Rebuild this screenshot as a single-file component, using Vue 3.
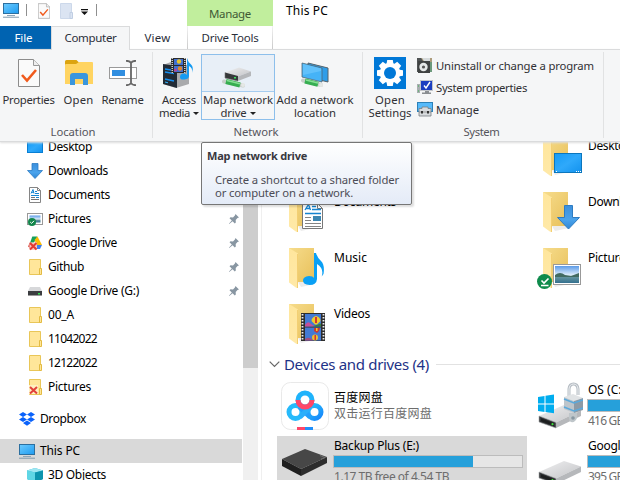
<script setup>
// Spreads a label over its nominal width so it keeps the metrics of the shell font.
const vFit = {
  mounted(el, { value }) {
    if (!value) return
    const natural = el.getBoundingClientRect().width
    const n = [...el.textContent].length
    el.style.letterSpacing = ((value - natural) / n).toFixed(3) + 'px'
  }
}

const tree = [
  { icon: 'desktop', text: 'Desktop', w: 44 },
  { icon: 'down', text: 'Downloads', w: 60, pin: true },
  { icon: 'doc', text: 'Documents', w: 62, pin: true },
  { icon: 'pic', text: 'Pictures', w: 43, pin: true },
  { icon: 'gdrive', text: 'Google Drive', w: 69, pin: true },
  { icon: 'folder', text: 'Github', w: 36, pin: true },
  { icon: 'disk', text: 'Google Drive (G:)', w: 91, pin: true },
  { icon: 'folder', text: '00_A', w: 26 },
  { icon: 'folder', text: '11042022', w: 49 },
  { icon: 'folder', text: '12122022', w: 49 },
  { icon: 'folderx', text: 'Pictures', w: 43 },
  { icon: 'dropbox', text: 'Dropbox', w: 46, root: true },
  { icon: 'pc', text: 'This PC', w: 40, root: true, selected: true },
  { icon: '3d', text: '3D Objects', w: 58 }
]

const folders = [
  { icon: '', text: '3D Objects', w: 58 },
  { icon: 'f-desktop', text: 'Desktop', w: 44 },
  { icon: 'f-doc', text: 'Documents', w: 62 },
  { icon: 'f-down', text: 'Downloads', w: 60 },
  { icon: 'f-music', text: 'Music', w: 33 },
  { icon: 'f-pic', text: 'Pictures', w: 43 },
  { icon: 'f-video', text: 'Videos', w: 36 }
]

const drives = [
  { icon: 'baidu', text: '百度网盘', w: 49, sub: '双击运行百度网盘', sw: 98 },
  { icon: 'osdrive', text: 'OS (C:)', w: 37, used: 60, sub: '416 GB free of 930 GB', sw: 107 },
  { icon: 'backup', text: 'Backup Plus (E:)', w: 85, used: 74.1, sub: '1.17 TB free of 4.54 TB', sw: 115, selected: true },
  { icon: 'bigdrive', text: 'Google Drive (G:)', w: 91, used: 60, sub: '395 GB free of 930 GB', sw: 107 }
]

const tools = [
  { icon: 'uninstall', text: 'Uninstall or change a program', w: 158 },
  { icon: 'sysprop', text: 'System properties', w: 91 },
  { icon: 'manage', text: 'Manage', w: 43 }
]
</script>

<template>
  <div class="window">
    <svg class="defs" aria-hidden="true">
      <defs>
        <linearGradient id="gBlue" x1="0" y1="0" x2="1" y2="1"><stop offset="0" stop-color="#6ccbff" /><stop offset="1" stop-color="#1e9bf0" /></linearGradient>
        <linearGradient id="gDesk" x1="0" y1="0" x2="1" y2="1"><stop offset="0" stop-color="#149bf5" /><stop offset=".5" stop-color="#2fa9fb" /><stop offset="1" stop-color="#1292ee" /></linearGradient>
        <linearGradient id="gFold" x1="0" y1="0" x2="1" y2="1"><stop offset="0" stop-color="#f6dc8c" /><stop offset="1" stop-color="#e8c05a" /></linearGradient>
        <linearGradient id="gFlap" x1="0" y1="0" x2="0" y2="1"><stop offset="0" stop-color="#ffe69c" /><stop offset="1" stop-color="#ffe9a8" /></linearGradient>
        <linearGradient id="gArrow" x1="0" y1="0" x2="0" y2="1"><stop offset="0" stop-color="#3c8fdc" /><stop offset=".6" stop-color="#4aa3ec" /><stop offset="1" stop-color="#2f86d4" /></linearGradient>
        <linearGradient id="gTop" x1="0" y1="0" x2="1" y2="1"><stop offset="0" stop-color="#f0f0f1" /><stop offset="1" stop-color="#c3c4c7" /></linearGradient>
        <linearGradient id="gSky" x1="0" y1="0" x2="0" y2="1"><stop offset="0" stop-color="#5c9be8" /><stop offset=".55" stop-color="#e4f1fb" /><stop offset=".6" stop-color="#6a99a0" /><stop offset="1" stop-color="#34708f" /></linearGradient>
        <linearGradient id="gCloud" x1="0" y1="0" x2="1" y2="1"><stop offset="0" stop-color="#27c4fb" /><stop offset="1" stop-color="#1787fb" /></linearGradient>
      </defs>

      <symbol id="pc" viewBox="0 0 16 16"><rect x=".5" y="1.500" width="15" height="10" fill="url(#gBlue)" stroke="#2c6f9f" /><path d="M4 13h8v1H4z" fill="#8fa6b8" /><path d="M0 14.700h16v1H0z" fill="#7f98ab" /></symbol>
      <symbol id="page" viewBox="0 0 22 28"><path d="M.5.5h15l6 6v21H.5z" fill="#fafafa" stroke="#8c8c8c" /><path d="M15.500.5v6h6" fill="#eee" stroke="#9a9a9a" /><path d="M4 16l5 5.500 9-10.500" fill="none" stroke="#f05a1c" stroke-width="2.600" /></symbol>
      <symbol id="folder" viewBox="0 0 16 16"><path d="M2.500.5h11v15h-11z" fill="#ffe69a" stroke="#e9c658" /><path d="M12.500 9.500h2v6h-2z" fill="#ffe69a" stroke="#e3bb43" /></symbol>
      <symbol id="folderx" viewBox="0 0 16 16"><use href="#folder" /><path d="M2 6h9v9H2z" fill="#fff0c0" /><path d="M3 8l7 6.500M10 8l-7 6.500" stroke="#e2413a" stroke-width="2" /></symbol>
      <symbol id="desktop" viewBox="0 0 16 16"><rect x=".5" y="2.500" width="15" height="11" fill="url(#gDesk)" stroke="#087fd4" /></symbol>
      <symbol id="down" viewBox="0 0 16 16"><path d="M5 .5h6v7h4.500L8 15.500.5 7.500H5z" fill="url(#gArrow)" stroke="#2b7bc4" stroke-width=".8" /></symbol>
      <symbol id="doc" viewBox="0 0 16 16"><path d="M2.500.5h8l3 3v12h-11z" fill="#fff" stroke="#858585" /><path d="M10.500.5v3h3" fill="none" stroke="#858585" /><path d="M4 6.500l2-4 1 4M4.500 5.300h2.500M8 4.500h2M8 6.500h4M4 8.500h8M9 10.500h3" stroke="#1686d2" fill="none" /><path d="M4 10.500h4M4 12.500h8" stroke="#777" /></symbol>
      <symbol id="pic" viewBox="0 0 16 16"><rect x=".5" y="2.500" width="15" height="11" fill="#fff" stroke="#999" /><rect x="2.500" y="4.500" width="11" height="7" fill="url(#gSky)" /><circle cx="5" cy="11" r="4" fill="#12864b" /><path d="M3.200 11l1.400 1.400L7 9.800" stroke="#fff" fill="none" /></symbol>
      <symbol id="gdrive" viewBox="0 0 16 16"><path d="M5.300 1.500h5.200L7 7.500 3 8z" fill="#17a05a" /><path d="M10.500 1.500L15 10h-5L7.500 5z" fill="#fbbc05" /><path d="M10 10h5l-2 4H8z" fill="#3f7ff0" /><path d="M1 11.500L3 7l4 4-3 3z" fill="#d84b43" /><path d="M2.500 7.500H10V15H2.500z" fill="#f6c9c2" /><path d="M3 8l6.500 6.500M9.500 8L3 14.500" stroke="#e23b32" stroke-width="2" /></symbol>
      <symbol id="disk" viewBox="0 0 16 16"><path d="M3 4h10l2 4H1z" fill="#d7d8da" /><rect x="1" y="8" width="14" height="5" fill="#3b3d40" /><path d="M1 12.500h14" stroke="#999" /><rect x="11" y="10" width="2" height="1.500" fill="#31e151" /></symbol>
      <symbol id="dropbox" viewBox="0 0 16 16"><path d="M4 1l4 2.500L4 6 0 3.500zM12 1l4 2.500L12 6 8 3.500zM4 6l4 2.500L4 11 0 8.500zM12 6l4 2.500-4 2.500-4-2.500zM8 9.500l4 2.500-4 2.700L4 12z" fill="#0a62fb" /></symbol>
      <symbol id="3d" viewBox="0 0 16 16"><path d="M0 3.500L8 1l8 2.500V12l-8 4-8-4z" fill="#35b8d2" /><path d="M0 3.500L8 1l8 2.500-8 2z" fill="#9fe7f2" /><path d="M0 3.500l8 2V16l-8-4z" fill="#5fd6e5" /><path d="M8 5.500l8-2V12l-8 4z" fill="#0c94ae" /></symbol>
      <symbol id="pin" viewBox="0 0 12 12"><path d="M7.500 1l3.500 3.500-1.500.6L7.700 7l.1 2.500-1 1L4.600 8.200 1.200 11l-.3-.2L3.800 7.400 1.500 5.200l1-1L5 4.400l1.900-1.800z" fill="#8896a2" /></symbol>

      <symbol id="openfolder" viewBox="0 0 28 26"><path d="M0 1.500Q0 0 1.500 0h10l3 3H28v6H0z" fill="#dca410" /><path d="M1 4h10l3-2h13q1 0 1 1v21H0V5q0-1 1-1z" fill="#ffd461" /><path d="M5 25V16q0-3 3-3h12q3 0 3 3v9h-5v-6h-8v6z" fill="#3a96dd" /></symbol>
      <symbol id="rename" viewBox="0 0 28 26"><rect x=".5" y="7.500" width="27" height="11" fill="#fff" stroke="#9a9a9a" /><rect x="3" y="10" width="13" height="6" fill="#308ee0" /><path d="M17 .8q4 0 5 2.200 1-2.200 5-2.200M22 3v20M17 25.200q4 0 5-2.200 1 2.200 5 2.200" fill="none" stroke="#666" stroke-width="1.800" /></symbol>
      <symbol id="media" viewBox="0 0 32 32"><path d="M0 8L13 3l13 6v18l-13 4-13-4z" fill="#a9aaac" /><path d="M0 7l14 2v22L0 27z" fill="#222b35" /><path d="M2 12l9 1.500M2 15l9 1.500M2 22l9 2" stroke="#168ff0" stroke-width="1.500" /><path d="M2 25l3 .8" stroke="#31b6ff" /><rect x="8" y="1" width="15" height="15" fill="#2b2b2b" /><path d="M9.200 1v15M21.800 1v15" stroke="#ddd" stroke-width="1.400" stroke-dasharray="1 1" /><rect x="11" y="2" width="9" height="6" fill="#416fd0" /><rect x="11" y="9" width="9" height="6" fill="#416fd0" /><circle cx="16" cy="4.500" r="2.200" fill="#e5c22e" /><circle cx="17" cy="11.500" r="2.200" fill="#de862e" /><circle cx="12.500" cy="13" r="1.600" fill="#b5429a" /><path d="M24 18V1q1 4 4 6.500T29 16q1-5-3-7v10q0 3-4.500 3.500T17 20t3-3.500 4 1.500z" fill="#159bf2" /></symbol>
      <symbol id="netdrive" viewBox="0 0 32 21"><path d="M3 5.500L17 .5l12 4-13 5z" fill="url(#gTop)" /><path d="M3 5.500L16 9v5L3 11z" fill="#36383a" /><path d="M16 9.500l13-5v4.500L16 14z" fill="#b5b7ba" /><path d="M3 11l13 3M3 5.500v5.500" stroke="#777" stroke-width=".6" /><rect x="12" y="10" width="2" height="1.500" fill="#39e35d" /><path d="M2 14.500l19 4" stroke="#c9cfcb" stroke-width="4" stroke-linecap="round" /><path d="M4 14.500l14 3.500" stroke="#36ad50" stroke-width="5" /><path d="M5 13.500l13 3.200" stroke="#86e094" stroke-width="1.600" /><circle cx="21" cy="18" r="2" fill="#e5e8e6" /></symbol>
      <symbol id="netloc" viewBox="0 0 28 26"><path d="M7 1l20 5v14L7 15z" fill="#2f9de8" stroke="#56636b" /><path d="M1 1l20 5v14L1 15z" fill="#45b3f7" stroke="#4e6674" stroke-width=".8" /><path d="M2 2l18 4.600V9L2 13z" fill="#6dc8fc" opacity=".7" /><path d="M2 18.500l18 4.500" stroke="#c9cfcb" stroke-width="4" stroke-linecap="round" /><path d="M4 19l13 3.200" stroke="#37ae51" stroke-width="5" /><path d="M5 18l12 3" stroke="#86e094" stroke-width="1.500" /><circle cx="20" cy="23" r="2" fill="#e5e8e6" /></symbol>
      <symbol id="gear" viewBox="0 0 32 32"><rect width="32" height="32" fill="#0078d7" /><g fill="#fff" transform="translate(16 16)"><circle r="10.200" /><g v-for="a in 8" :key="a"><path :transform="`rotate(${a * 45})`" d="M-2.800-13h5.600l.8 5h-7.200z" /></g></g><circle cx="16" cy="16" r="6" fill="#0078d7" /></symbol>
      <symbol id="uninstall" viewBox="0 0 16 16"><path d="M4 1h11v14H5z" fill="#ad9c7c" /><path d="M0 1h4l2 3v11H0z" fill="#4f5354" /><rect x="1" y="4" width="12" height="12" fill="#3f4242" /><circle cx="6.500" cy="10" r="4.200" fill="#e5e8e8" /><circle cx="6.500" cy="10" r="1.600" fill="#555" /><path d="M5 1h8v3H7z" fill="#d7dbdc" /><path d="M13 5h2v10h-2z" fill="#6c9a7c" /></symbol>
      <symbol id="sysprop" viewBox="0 0 16 16"><path d="M0 5h3v9H0z" fill="#a9aeb1" /><path d="M1 7h1M1 12h1" stroke="#36b94b" /><rect x="3.500" y="1.500" width="12" height="10" fill="#1d3fc0" stroke="#c3c6cb" /><path d="M7 6.500L9 9l4-6" fill="none" stroke="#fff" stroke-width="1.400" /><path d="M8 12h4v1.500h2V15H5v-1.500h3z" fill="#8a8e92" /></symbol>
      <symbol id="manage" viewBox="0 0 16 16"><rect x=".5" y="1.500" width="15" height="9" fill="#56bafa" stroke="#2c81b8" /><path d="M5 7.500V6h6v1.500h3V15H2V7.500z" fill="#d7dadd" stroke="#777d84" stroke-width=".8" /><path d="M2 11h12" stroke="#888" stroke-width=".8" /><path d="M4 10h2v2.500H4zM10 10h2v2.500h-2z" fill="#333" /></symbol>

      <symbol id="bigfolder" viewBox="0 0 48 48"><path d="M17 38h17v2l-14 3z" fill="#ececec" /><path d="M8 4h25v34H15z" fill="url(#gFold)" /><path d="M8 4l9 5.500V43l-1.500 1L8 38.500z" fill="url(#gFlap)" /><path d="M16.500 10v34" stroke="#f3cf73" /></symbol>
      <symbol id="f-desktop" viewBox="0 0 48 48"><use href="#bigfolder" /><rect x="19.500" y="21.500" width="27" height="19" fill="url(#gDesk)" stroke="#0b76bd" /><path d="M21 39.500h1M41 39.500h1M43 39.500h1M45 39.500h1" stroke="#fff" /></symbol>
      <symbol id="f-doc" viewBox="0 0 48 48"><use href="#bigfolder" /><path d="M21.500 15.500h15l5 5v20h-20z" fill="#fff" stroke="#777" /><path d="M36.500 15.500v5h5" fill="none" stroke="#777" /><path d="M24 22l3.500-5.500 2 5.500M25 20.500h4M31 18.500h4M31 21.500h9M24 25.500h16" stroke="#1584d0" stroke-width="1.300" fill="none" /><path d="M24 29.500h6M24 32.500h6M24 35.500h16M24 38.500h16" stroke="#858585" /><rect x="32" y="28" width="8" height="5" fill="#3c86b2" /></symbol>
      <symbol id="f-down" viewBox="0 0 48 48"><use href="#bigfolder" /><path d="M29.500 17.500h8v12h7L33.500 41l-11-11.500h7z" fill="url(#gArrow)" stroke="#2e7cc2" /></symbol>
      <symbol id="f-music" viewBox="0 0 48 48"><use href="#bigfolder" /><path d="M33 34V9h2q1 4 5 8t2.500 13l-1.800 2.500q2.500-8-4.700-12.500V35q-.5 6-7.500 6-6.500-.5-6.500-4.500t6-4.500q4 0 5 2z" fill="#0aa0f5" /></symbol>
      <symbol id="f-pic" viewBox="0 0 48 48"><use href="#bigfolder" /><rect x="18.500" y="20.500" width="27" height="20" fill="#fff" stroke="#999" /><rect x="20" y="22" width="24" height="17" fill="url(#gSky)" /><path d="M20 31q5-4 10 0l6 1 8-3v4H20z" fill="#426b61" /><circle cx="9.500" cy="37.500" r="7.500" fill="#0f8b4c" /><path d="M6.500 36.500l2.500 2.500 4.500-4.500M6 41.500h7.500" stroke="#fff" stroke-width="1.600" fill="none" /></symbol>
      <symbol id="f-video" viewBox="0 0 48 48"><use href="#bigfolder" /><rect x="20" y="13" width="24" height="28" fill="#2e2e2e" /><path d="M21.500 14v27M42.500 14v27" stroke="#eee" stroke-width="1.800" stroke-dasharray="1.500 1.500" /><rect x="24" y="14" width="16" height="12.500" fill="#437ad3" /><rect x="24" y="27.500" width="16" height="13" fill="#437ad3" /><path d="M24 25q3-5 6-1l4 2.500H24z" fill="#c74e98" /><path d="M31 26.500l9-3v3z" fill="#378140" /><path d="M32 17.500q3-3 6 0t0 5l-2 2h-2l-2-2q-3-2 0-5z" fill="#f0cb2d" /><path d="M34 17h2v6h-2z" fill="#d5342f" /><path d="M33 28h6l-1 3-2 2-3-2z" fill="#ca3832" /><path d="M35 28h1.500v3H35z" fill="#f0cb2d" /><circle cx="34" cy="37.500" r="3" fill="#ecbf31" /><path d="M33.500 35h1.500v5h-1.500z" fill="#d5342f" /><path d="M24 39q5-3 8 1.500h-8z" fill="#a44e7d" /></symbol>

      <symbol id="baidu" viewBox="0 0 48 48"><rect x=".5" y=".5" width="47" height="47" rx="9" fill="#fff" stroke="#e9e9e9" /><g fill="none" stroke-width="5"><circle cx="14.500" cy="30" r="6.500" stroke="#26bafb" /><circle cx="33.500" cy="30" r="6.500" stroke="url(#gCloud)" /><path d="M18.500 25l10.500 10" stroke="#239ffc" /><path d="M19 35l10-9.500" stroke="#2aaefb" /><circle cx="24" cy="18" r="7" stroke="#1fb3fb" /><path d="M17 18a7 7 0 1 0 14 0" stroke="#ff4668" /></g><path d="M16 45h8v3h-8z" fill="#ff4668" /><path d="M24 45h8v3h-8z" fill="#1f8ffa" /></symbol>
      <symbol id="drivebody" viewBox="0 0 48 26"><path d="M4 13L29 2l17 5.500-25 12z" fill="url(#gTop)" /><path d="M4 13l17 6.500V25L4 19z" fill="#333538" /><path d="M21 19.500l25-12V13L21 25z" fill="#b6b8bb" /><path d="M6 15.200l13 5V23L6 18.200z" fill="#1d1f20" /><circle cx="17.500" cy="21.200" r="1.100" fill="#3fe03b" /><path d="M4 13l17 6.500V25L4 19z" fill="none" stroke="#a5a7aa" stroke-width=".6" /></symbol>
      <symbol id="bigdrive" viewBox="0 0 48 48"><use href="#drivebody" y="21" width="48" height="26" /></symbol>
      <symbol id="osdrive" viewBox="0 0 48 48"><use href="#drivebody" y="21" width="48" height="26" /><path d="M3 15l6.500-1v7.500H3zM10.500 13.800L19 12.500v9h-8.500zM3 22.500h6.500V30L3 29zM10.500 22.500H19v8.800l-8.500-1.200z" fill="#00adef" /><path d="M34 14V7q.5-5 4.500-5T43 7v6" fill="none" stroke="#b6bdc4" stroke-width="3" /><path d="M34 14V7q.5-5 4.500-5T43 7v6" fill="none" stroke="#eceff1" stroke-width="1" /><path d="M29 15l9-3 10 4-9 3z" fill="#e0e3e5" /><path d="M29 15l10 4v12l-10-4z" fill="#bdc5cb" /><path d="M39 19l9-3v12l-9 3z" fill="#8c9aa6" /><path d="M29 17l10 4 9-3M29 25l10 4 9-3" fill="none" stroke="#5aa9dc" stroke-width="1.500" /><path d="M34 31h8v5q-2 5-6 4-2-1-2-4z" fill="#bfc6ca" /><circle cx="38" cy="36" r="1.800" fill="#8998a2" /></symbol>
      <symbol id="backup" viewBox="0 0 48 48"><path d="M1 21L24 11l22 8-26 12z" fill="#474747" /><path d="M1 21l19 10v7L1 28z" fill="#1f1f1f" /><path d="M20 31l26-12v6L20 38z" fill="#2d2d2d" /><path d="M39 17.500l5 2-4 1.500" stroke="#777" fill="none" stroke-width=".8" /></symbol>
    </svg>

    <header class="titlebar">
      <svg class="i16"><use href="#pc" /></svg>
      <i class="tick"></i>
      <svg class="qpage"><use href="#page" /></svg>
      <svg class="qfolder" viewBox="0 0 13 16"><path d="M.5.5h11v15H.5z" fill="#dbe4f2" stroke="#ccd8ea" /><path d="M10 9.500h2.500v6H10z" fill="#dbe4f2" stroke="#c0cee3" /></svg>
      <svg class="qmenu" viewBox="0 0 7 6"><path d="M0 0h7v1.200H0zM0 2.500h7L3.500 6z" fill="#111" /></svg>
      <i class="tick last"></i>
      <div class="context"><span v-fit="42">Manage</span></div>
      <span class="title" v-fit="42">This PC</span>
    </header>

    <nav class="tabs">
      <div class="tab file"><span v-fit="18">File</span></div>
      <div class="tab active"><span v-fit="52">Computer</span></div>
      <div class="tab view"><span v-fit="26">View</span></div>
      <div class="tab drive"><span v-fit="57">Drive Tools</span></div>
    </nav>

    <section class="ribbon">
      <div class="group location">
        <div class="buttons">
          <div class="btn b1"><div class="pic"><svg width="22" height="28"><use href="#page" /></svg></div><span v-fit="52">Properties</span></div>
          <div class="btn b2"><div class="pic"><svg width="28" height="26"><use href="#openfolder" /></svg></div><span v-fit="30">Open</span></div>
          <div class="btn b3"><div class="pic"><svg width="28" height="26"><use href="#rename" /></svg></div><span v-fit="42">Rename</span></div>
        </div>
        <div class="caption"><span v-fit="45">Location</span></div>
      </div>
      <div class="group network">
        <div class="buttons">
          <div class="btn b4"><div class="pic"><svg width="32" height="32"><use href="#media" /></svg></div><span v-fit="34">Access</span><div class="line"><span v-fit="31">media</span><i class="caret"></i></div></div>
          <div class="btn hot"><div class="pic low"><svg width="32" height="21"><use href="#netdrive" /></svg></div><span v-fit="70">Map network</span><div class="line"><span v-fit="26">drive</span><i class="caret"></i></div></div>
          <div class="btn b5"><div class="pic low"><svg width="28" height="26"><use href="#netloc" /></svg></div><span v-fit="77">Add a network</span><span v-fit="42">location</span></div>
        </div>
        <div class="caption"><span v-fit="45">Network</span></div>
      </div>
      <div class="group system">
        <div class="buttons">
          <div class="btn b6"><div class="pic"><svg width="32" height="32"><use href="#gear" /></svg></div><span v-fit="30">Open</span><span v-fit="43">Settings</span></div>
          <div class="list">
            <div v-for="t in tools" :key="t.text" class="tool"><svg class="i16"><use :href="'#' + t.icon" /></svg><span v-fit="t.w">{{ t.text }}</span></div>
          </div>
        </div>
        <div class="caption"><span v-fit="36">System</span></div>
      </div>
    </section>

    <main class="body">
      <aside class="tree">
        <div v-for="(n, i) in tree" :key="i" class="node" :class="{ root: n.root, selected: n.selected }">
          <svg class="i16"><use :href="'#' + n.icon" /></svg>
          <span v-fit="n.w">{{ n.text }}</span>
          <svg v-if="n.pin" class="pin"><use href="#pin" /></svg>
        </div>
      </aside>
      <div class="scroll"><div class="thumb"></div></div>
      <div class="content">
        <div class="tiles">
          <div v-for="f in folders" :key="f.text" class="tile">
            <svg class="i48"><use :href="'#' + f.icon" /></svg>
            <span class="name" v-fit="f.w">{{ f.text }}</span>
          </div>
        </div>
        <div class="section">
          <svg width="11" height="7" viewBox="0 0 11 7"><path d="M.7.7l4.800 4.800L10.300.7" fill="none" stroke="#666" stroke-width="1.200" /></svg>
          <span v-fit="145">Devices and drives (4)</span>
          <i class="rule"></i>
        </div>
        <div class="tiles drives">
          <div v-for="d in drives" :key="d.text" class="tile" :class="{ picked: d.selected }">
            <svg class="i48"><use :href="'#' + d.icon" /></svg>
            <div class="info" :class="{ plain: !d.used }">
              <span v-fit="d.w">{{ d.text }}</span>
              <div v-if="d.used" class="meter"><div class="used" :style="{ width: d.used + '%' }"></div></div>
              <span class="sub" v-fit="d.sw">{{ d.sub }}</span>
            </div>
          </div>
        </div>
      </div>
    </main>

    <div class="tooltip">
      <strong v-fit="100">Map network drive</strong>
      <div class="tip"><span v-fit="184">Create a shortcut to a shared folder</span><span v-fit="138">or computer on a network.</span></div>
    </div>
  </div>
</template>

<style>
body { margin: 0; background: #fff; overflow: hidden; }
</style>

<style scoped>
.window { position: relative; width: 620px; height: 480px; overflow: hidden; display: flex; flex-direction: column; background: #fff; color: #000; font-family: "Noto Sans", "Open Sans", "Noto Sans CJK SC", sans-serif; font-size: 12px; line-height: 16px; white-space: nowrap; }
.defs { position: absolute; width: 0; height: 0; }
svg { display: block; flex: none; }
.i16 { width: 16px; height: 16px; }
.i48 { width: 48px; height: 48px; }

.titlebar { display: flex; height: 26px; flex: none; align-items: flex-start; box-sizing: border-box; padding-left: 3px; }
.titlebar .i16 { margin-top: 2px; }
.tick { width: 1px; height: 12px; margin: 4px 0 0 7px; background: #8f8f8f; }
.qpage { width: 12px; height: 16px; margin: 3px 0 0 11px; }
.qfolder { width: 13px; height: 16px; margin: 3px 0 0 10px; }
.qmenu { width: 7px; height: 6px; margin: 9px 0 0 8px; }
.tick.last { margin-left: 8px; }
.context { width: 86px; height: 26px; margin-left: 90px; background: #c1ee9d; color: #3f5a35; display: flex; justify-content: center; line-height: 27px; font-size: 11.5px; }
.title { margin: 3px 0 0 13px; }

.tabs { display: flex; height: 23px; flex: none; line-height: 24px; color: #2b2f3a; font-size: 11.5px; }
.tab { display: flex; justify-content: center; box-sizing: border-box; height: 23px; }
.file { width: 51px; padding-right: 4px; background: #0063b1; color: #fff; }
.active { width: 79px; height: 24px; line-height: 22px; border: 1px solid #dadbdc; border-bottom: 0; background: #f5f6f7; z-index: 1; }
.view { width: 57px; padding-right: 2px; }
.drive { width: 86px; border: solid; border-width: 0 1px; border-image: linear-gradient(#f4f4f4, #c8c8c8) 1; }

.ribbon { display: flex; box-sizing: border-box; height: 93px; flex: none; border: solid #dadbdc; border-width: 1px 0; background: #f5f6f7; color: #303034; font-size: 11.3px; line-height: 13px; position: relative; box-shadow: 0 1px 2px #ddd; }
.group { box-sizing: border-box; height: 86px; margin-top: 2px; border-right: 1px solid #e1e2e3; display: flex; flex-direction: column; }
.location { width: 153px; }
.network { width: 210px; }
.system { width: 241px; }
.buttons { display: flex; height: 72px; }
.btn { display: flex; flex-direction: column; align-items: center; box-sizing: border-box; height: 68px; }
.pic { height: 41px; display: flex; align-items: center; box-sizing: border-box; }
.b1 { width: 57px; }
.b2 { width: 43px; }
.b3 { width: 45px; }
.b4 { width: 42px; margin-left: 5px; }
.b5 { width: 78px; margin-left: 1px; }
.b6 { width: 46px; margin-left: 4px; }
.low { align-items: flex-end; padding-bottom: 5px; }
.hot { width: 74px; height: 66px; margin: 2px 0 0 1px; border: 1px solid #8dbfeb; }
.hot .pic { height: 37px; width: 100%; justify-content: center; border-bottom: 1px solid #a5ccef; margin-bottom: 1px; background: #e8eff7; padding-bottom: 3px; }
.line { display: flex; gap: 3px; align-items: center; }
.caret { border: 3px solid transparent; border-top-color: #222; border-bottom: 0; margin-top: 1px; }
.list { display: flex; flex-direction: column; margin: 2px 0 0 4px; }
.tool { display: flex; align-items: center; gap: 3px; height: 22px; line-height: 16px; }
.tool span { padding-top: 1px; }
.caption { display: flex; justify-content: center; padding-top: 1px; color: #55555c; }
.location .caption { padding-right: 6px; }
.network .caption { padding-right: 3px; }
.system .caption { padding-right: 3px; }

.body { flex: 1; min-height: 0; display: flex; overflow: hidden; }
.tree { width: 243px; margin-top: -7px; }
.node { display: flex; align-items: center; height: 24px; width: 242px; box-sizing: border-box; padding: 0 2px 0 27px; gap: 5px; }
.node.root { padding-left: 19px; margin-top: 8px; }
.node.selected { background: #d9d9d9; }
.pin { width: 12px; height: 12px; margin-left: auto; }
.scroll { width: 15px; background: #f0f0f0; }
.thumb { height: 226px; background: #cdcdcd; }
.content { width: 359px; margin-left: 3px; border-left: 1px solid #efefef; box-sizing: border-box; overflow: hidden; }
.tiles { display: grid; grid-template-columns: 250px 250px; column-gap: 4px; row-gap: 8px; margin: -10px 0 0 15px; }
.tile { display: flex; gap: 5px; height: 48px; padding-left: 4px; box-sizing: border-box; }
.name { margin-top: 6px; align-self: flex-start; }
.section { display: flex; align-items: center; height: 22px; margin: 5px 0 0 7px; gap: 4px; font-size: 15px; line-height: 22px; color: #1e3287; }
.rule { flex: 1; height: 1px; margin-left: 3px; background: #e2e2e2; }
.drives { margin-top: 5px; row-gap: 6px; }
.drives .tile { height: 50px; padding-top: 2px; }
.info { display: flex; flex-direction: column; align-items: flex-start; height: 48px; }
.info.plain { padding-top: 8px; }
.sub { color: #6d6d6d; }
.meter { box-sizing: border-box; width: 190px; height: 13px; margin: 1px 0 1px -1px; border: 1px solid #bcbcbc; background: #e6e6e6; }
.used { height: 100%; background: #26a0da; }
.picked { background: #d9d9d9; }

.tooltip { position: absolute; left: 201px; top: 142px; width: 211px; height: 63px; box-sizing: border-box; border: 1px solid #767676; border-radius: 2px; background: linear-gradient(#fff, #e4ebf7); box-shadow: 2px 2px 2px #0002; padding: 5px; color: #4c4c55; font-size: 11.3px; display: flex; flex-direction: column; align-items: flex-start; }
.tooltip strong { color: #38383f; font-size: 11px; }
.tip { display: flex; flex-direction: column; align-items: flex-start; padding: 9px 0 0 8px; line-height: 13px; }
</style>
